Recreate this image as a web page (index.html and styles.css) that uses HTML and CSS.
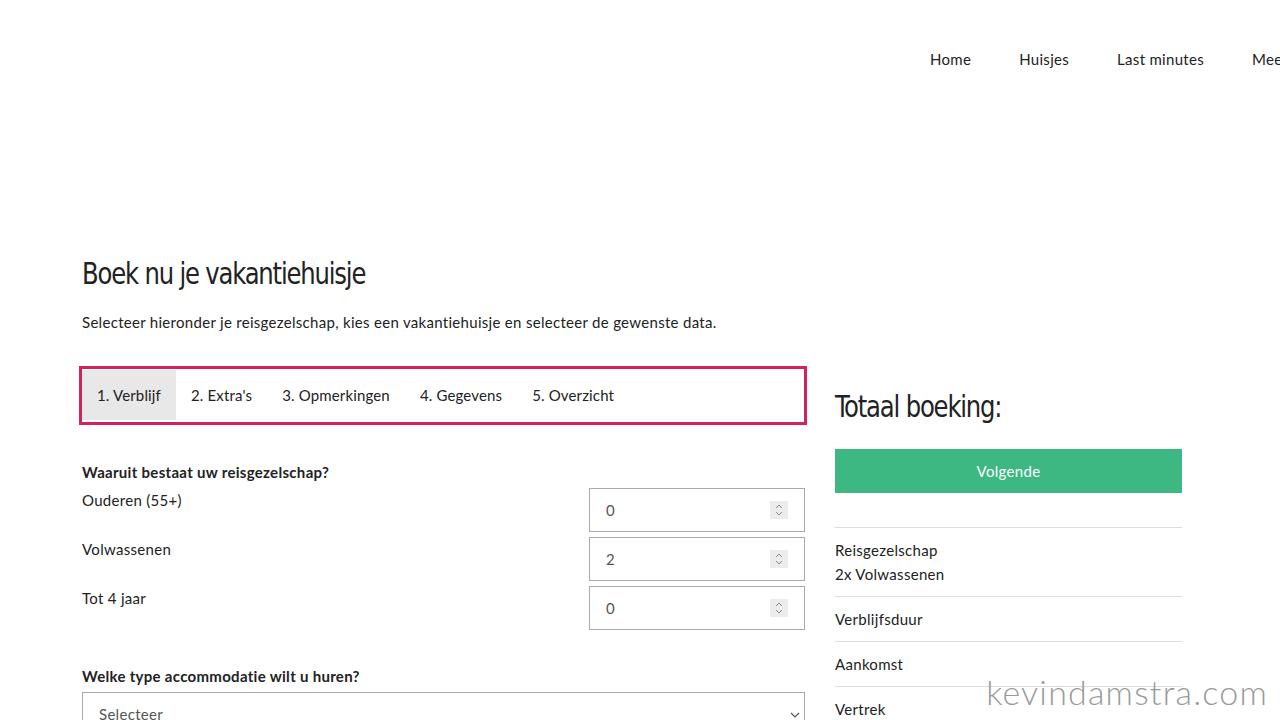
FILE: index.html
```html
<!DOCTYPE html>
<html lang="nl">
<head>
<meta charset="utf-8">
<title>Boek nu je vakantiehuisje</title>
<link rel="stylesheet" href="styles.css">
</head>
<body>
<header class="topbar">
  <nav class="mainnav">
    <a href="#">Home</a>
    <a href="#">Huisjes</a>
    <a href="#">Last minutes</a>
    <a href="#">Meer informatie</a>
  </nav>
</header>
<main class="page">
  <h1 class="title"><span class="narrow">Boek nu je vakantiehuisje</span></h1>
  <p class="intro">Selecteer hieronder je reisgezelschap, kies een vakantiehuisje en selecteer de gewenste data.</p>
  <div class="cols">
    <section class="left">
      <div class="tabs">
        <span class="tab active">1. Verblijf</span>
        <span class="tab">2. Extra's</span>
        <span class="tab">3. Opmerkingen</span>
        <span class="tab">4. Gegevens</span>
        <span class="tab">5. Overzicht</span>
      </div>
      <h4 class="q">Waaruit bestaat uw reisgezelschap?</h4>
      <div class="row first">
        <span class="lbl">Ouderen (55+)</span>
        <div class="num"><span class="val">0</span><span class="spin"><svg width="10" height="14" viewBox="0 0 10 14"><path d="M2 5 L5 2 L8 5 M2 9 L5 12 L8 9" fill="none" stroke="#888" stroke-width="1"/></svg></span></div>
      </div>
      <div class="row">
        <span class="lbl">Volwassenen</span>
        <div class="num"><span class="val">2</span><span class="spin"><svg width="10" height="14" viewBox="0 0 10 14"><path d="M2 5 L5 2 L8 5 M2 9 L5 12 L8 9" fill="none" stroke="#888" stroke-width="1"/></svg></span></div>
      </div>
      <div class="row">
        <span class="lbl">Tot 4 jaar</span>
        <div class="num"><span class="val">0</span><span class="spin"><svg width="10" height="14" viewBox="0 0 10 14"><path d="M2 5 L5 2 L8 5 M2 9 L5 12 L8 9" fill="none" stroke="#888" stroke-width="1"/></svg></span></div>
      </div>
      <h4 class="q q2">Welke type accommodatie wilt u huren?</h4>
      <div class="select"><span>Selecteer</span><svg width="10" height="6" viewBox="0 0 10 6"><path d="M1 1 L5 5 L9 1" fill="none" stroke="#555" stroke-width="1.2"/></svg></div>
    </section>
    <aside class="right">
      <h2 class="total"><span class="narrow">Totaal boeking:</span></h2>
      <button class="next">Volgende</button>
      <ul class="summary">
        <li>Reisgezelschap<br>2x Volwassenen</li>
        <li>Verblijfsduur</li>
        <li>Aankomst</li>
        <li>Vertrek</li>
      </ul>
    </aside>
  </div>
</main>
<div class="watermark">kevindamstra.com</div>
</body>
</html>
```
FILE: styles.css
```css
html, body {
  margin: 0;
  padding: 0;
  background: #fff;
  overflow: hidden;
}
body {
  font-family: "Lato", "Open Sans", sans-serif;
  font-size: 15px;
  letter-spacing: 0.3px;
  color: #222;
  width: 1280px;
  height: 720px;
  position: relative;
}
.topbar {
  height: 118px;
  padding-left: 930px;
  white-space: nowrap;
}
.mainnav {
  display: flex;
  gap: 48px;
  padding-top: 50px;
}
.mainnav a {
  color: #222;
  text-decoration: none;
  line-height: 18px;
}
.page {
  padding-left: 82px;
  padding-top: 137px;
}
.title,
.total {
  font-family: "DejaVu Sans", sans-serif;
  font-stretch: condensed;
  font-weight: 400;
  font-size: 30px;
  letter-spacing: -1.3px;
  margin: 0;
  line-height: 38px;
  color: #222;
  white-space: nowrap;
}
.narrow {
  display: inline-block;
  transform: scaleX(0.9);
  transform-origin: left center;
}
.intro {
  margin: 19px 0 0;
  line-height: 20px;
}
.cols {
  display: flex;
  gap: 30px;
  margin-top: 34px;
}
.left {
  width: 723px;
}
.right {
  width: 347px;
}
.tabs {
  display: flex;
  border: 3px solid #d3215c;
  margin-left: -3px;
  width: 722px;
  padding: 1px 0 2px;
  height: 50px;
}
.tab {
  display: flex;
  align-items: center;
  padding: 0 15px;
  color: #222;
  letter-spacing: 0.15px;
}
.tab.active {
  background: #e8e8e8;
}
.q {
  font-weight: 700;
  font-size: 15px;
  margin: 37px 0 0;
  line-height: 20px;
}
.q2 {
  margin-top: 36px;
}
.row {
  display: flex;
  justify-content: space-between;
  align-items: flex-start;
  margin-top: 5px;
}
.row.first {
  margin-top: 6px;
}
.lbl {
  line-height: 20px;
  padding-top: 2px;
}
.num {
  height: 42px;
  border: 1px solid #aaa;
  display: flex;
  align-items: center;
  justify-content: space-between;
  padding: 0 16px;
  box-sizing: content-box;
  width: 182px;
  color: #555;
}
.spin {
  width: 18px;
  height: 18px;
  background: #ececec;
  display: flex;
  align-items: center;
  justify-content: center;
}
.select {
  height: 44px;
  border: 1px solid #aaa;
  display: flex;
  align-items: center;
  justify-content: space-between;
  padding: 0 4px 0 16px;
  color: #555;
  box-sizing: border-box;
  margin-top: 6px;
}
.select svg {
  margin-top: 2px;
}
.total {
  margin-top: 22px;
}
.next {
  display: block;
  width: 100%;
  height: 44px;
  margin-top: 23px;
  border: 0;
  background: #3db882;
  color: #fff;
  font-family: inherit;
  font-size: 15px;
  letter-spacing: 0.3px;
  cursor: pointer;
}
.summary {
  list-style: none;
  margin: 34px 0 0;
  padding: 0;
  border-top: 1px solid #ddd;
}
.summary li {
  border-bottom: 1px solid #ddd;
  padding: 10px 0 10px;
  line-height: 24px;
}
.watermark {
  position: absolute;
  right: 12px;
  bottom: 8px;
  font-family: "Lato", sans-serif;
  font-weight: 300;
  font-size: 34px;
  color: #9a9a9a;
  letter-spacing: 1.2px;
}
```
